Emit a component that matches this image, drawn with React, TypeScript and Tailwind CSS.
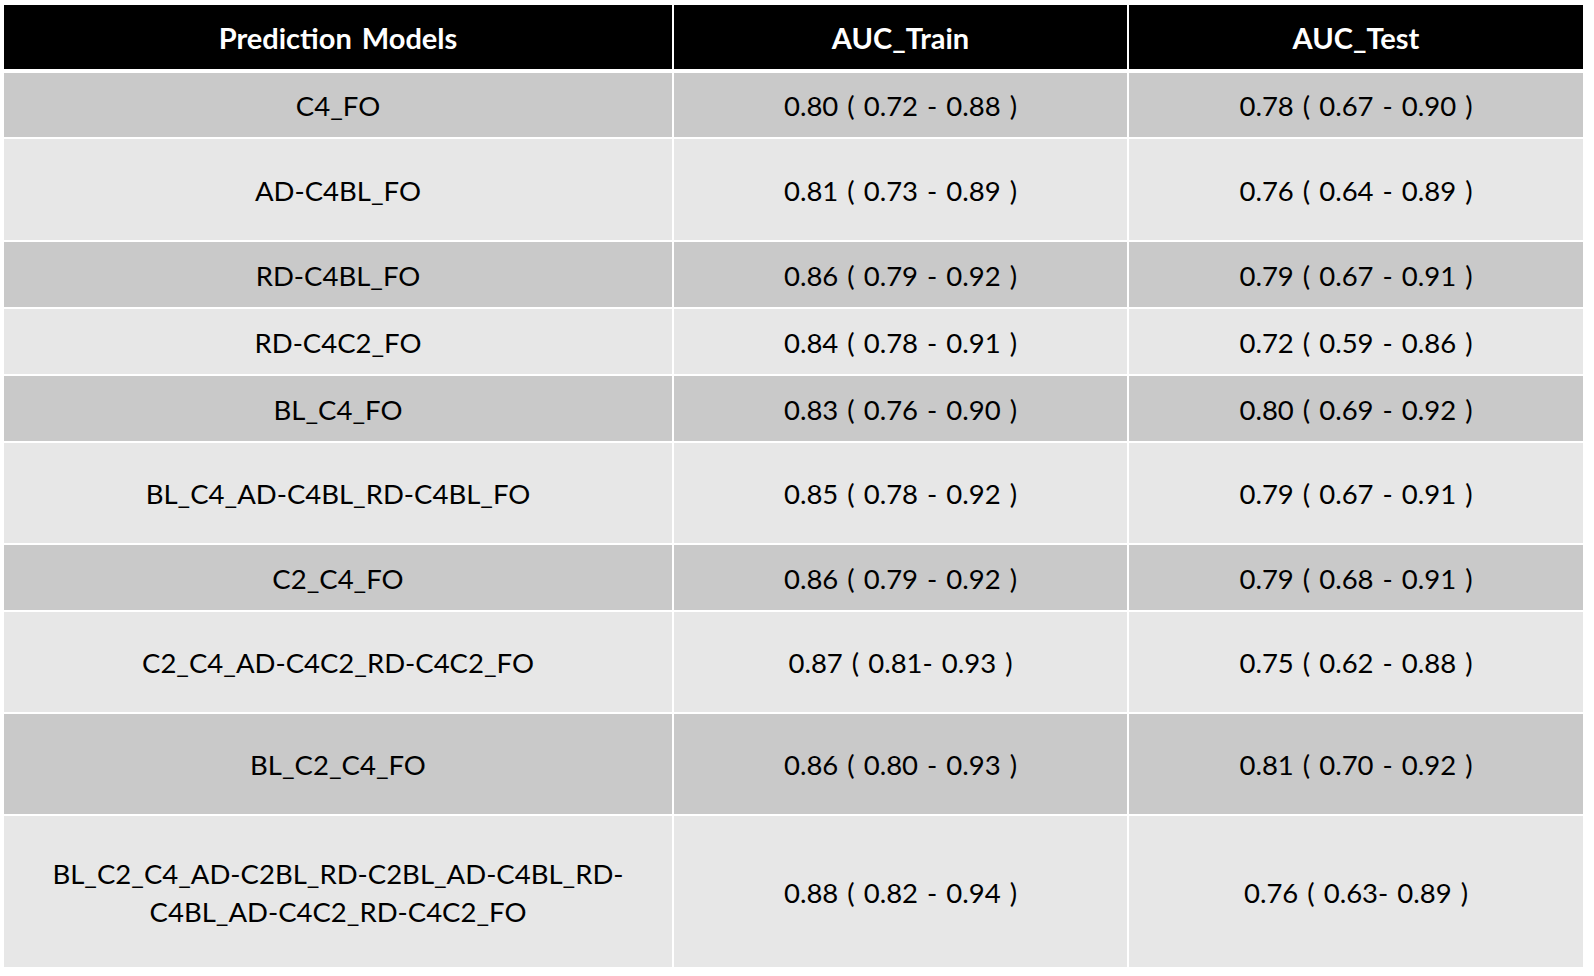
const rows = [
  { model: "C4_FO", train: "0.80 ( 0.72 - 0.88 )", test: "0.78 ( 0.67 - 0.90 )", h: "h-[64px]", dark: true },
  { model: "AD-C4BL_FO", train: "0.81 ( 0.73 - 0.89 )", test: "0.76 ( 0.64 - 0.89 )", h: "h-[101px]", dark: false },
  { model: "RD-C4BL_FO", train: "0.86 ( 0.79 - 0.92 )", test: "0.79 ( 0.67 - 0.91 )", h: "h-[65px]", dark: true },
  { model: "RD-C4C2_FO", train: "0.84 ( 0.78 - 0.91 )", test: "0.72 ( 0.59 - 0.86 )", h: "h-[65px]", dark: false },
  { model: "BL_C4_FO", train: "0.83 ( 0.76 - 0.90 )", test: "0.80 ( 0.69 - 0.92 )", h: "h-[65px]", dark: true },
  { model: "BL_C4_AD-C4BL_RD-C4BL_FO", train: "0.85 ( 0.78 - 0.92 )", test: "0.79 ( 0.67 - 0.91 )", h: "h-[100px]", dark: false },
  { model: "C2_C4_FO", train: "0.86 ( 0.79 - 0.92 )", test: "0.79 ( 0.68 - 0.91 )", h: "h-[65px]", dark: true },
  { model: "C2_C4_AD-C4C2_RD-C4C2_FO", train: "0.87 ( 0.81- 0.93 )", test: "0.75 ( 0.62 - 0.88 )", h: "h-[100px]", dark: false },
  { model: "BL_C2_C4_FO", train: "0.86 ( 0.80 - 0.93 )", test: "0.81 ( 0.70 - 0.92 )", h: "h-[100px]", dark: true },
];

function Cell({ children, className }: { children: React.ReactNode; className: string }) {
  return <div className={`flex items-center justify-center text-center pt-[2px] ${className}`}>{children}</div>;
}

export default function App() {
  return (
    <div className="w-[1594px] h-[976px] bg-white pl-[4px] pt-[5px] font-['Lato',sans-serif] text-[27.5px] text-black">
      <div className="w-[1579px] flex flex-col gap-[2px]">
        {/* header */}
        <div className="grid grid-cols-[668px_453px_454px] gap-x-[2px] h-[64px] mb-[2px] font-bold text-white text-[29px]">
          <Cell className="bg-black [word-spacing:3px]">Prediction Models</Cell>
          <Cell className="bg-black">AUC_Train</Cell>
          <Cell className="bg-black">AUC_Test</Cell>
        </div>

        {rows.map((r) => (
          <div key={r.model} className={`grid grid-cols-[668px_453px_454px] gap-x-[2px] ${r.h}`}>
            <Cell className={r.dark ? "bg-[#c9c9c9]" : "bg-[#e7e7e7]"}>{r.model}</Cell>
            <Cell className={`[word-spacing:2px] ${r.dark ? "bg-[#c9c9c9]" : "bg-[#e7e7e7]"}`}>{r.train}</Cell>
            <Cell className={`[word-spacing:2px] ${r.dark ? "bg-[#c9c9c9]" : "bg-[#e7e7e7]"}`}>{r.test}</Cell>
          </div>
        ))}

        <div className="grid grid-cols-[668px_453px_454px] gap-x-[2px] h-[151px]">
          <Cell className="bg-[#e7e7e7] leading-[38px]">
            <span>
              BL_C2_C4_AD-C2BL_RD-C2BL_AD-C4BL_RD-
              <br />
              C4BL_AD-C4C2_RD-C4C2_FO
            </span>
          </Cell>
          <Cell className="bg-[#e7e7e7] [word-spacing:2px]">0.88 ( 0.82 - 0.94 )</Cell>
          <Cell className="bg-[#e7e7e7] [word-spacing:2px]">0.76 ( 0.63- 0.89 )</Cell>
        </div>
      </div>
    </div>
  );
}
